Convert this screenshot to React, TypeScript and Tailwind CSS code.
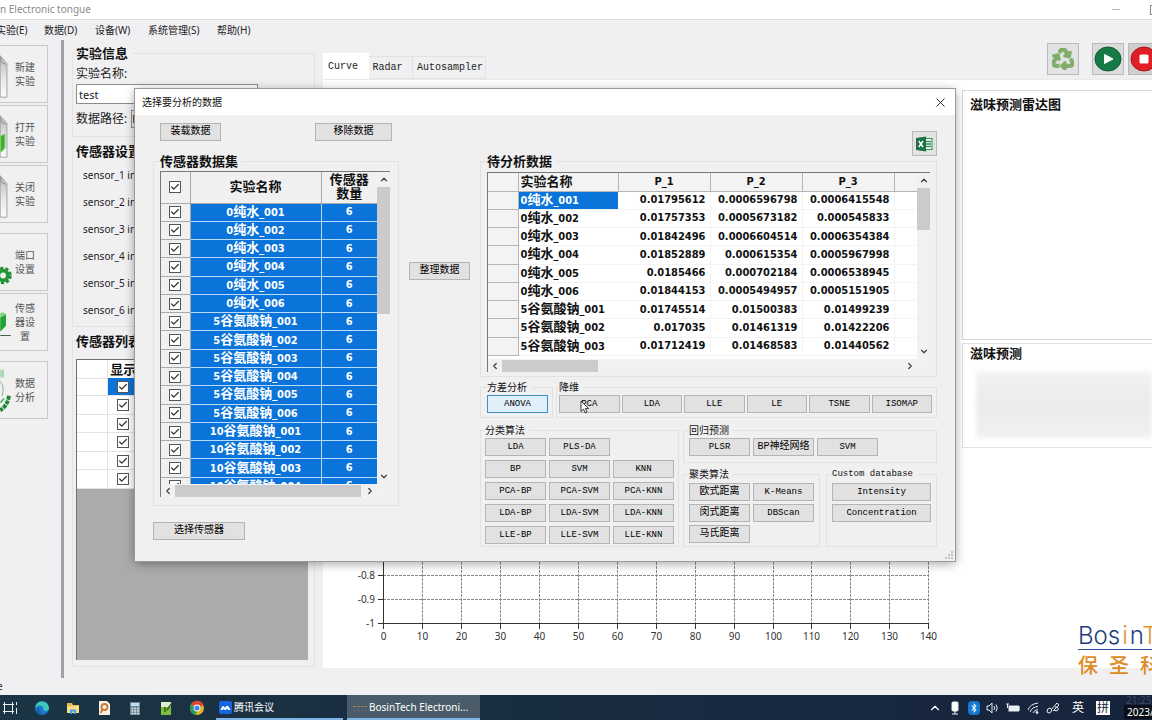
import React from "react";
import {
  Check,
  ChevronDown,
  ChevronLeft,
  ChevronRight,
  ChevronUp,
  X,
} from "lucide-react";
import { FaRecycle, FaBluetoothB } from "react-icons/fa";

const CJK = "font-['Noto_Sans','Noto_Sans_CJK_SC',sans-serif]";
const MONO = "font-['Liberation_Mono','Noto_Sans_CJK_SC',monospace]";
const BOLD = "font-['DejaVu_Sans_Condensed','DejaVu_Sans','Noto_Sans_CJK_SC',sans-serif] font-bold";

/* ---------- shared controls ---------- */

function Tick({ label }: { label: string }) {
  return (
    <label className="mx-auto grid size-3 place-items-center">
      <input
        type="checkbox"
        defaultChecked
        aria-label={label}
        className="col-start-1 row-start-1 size-3 appearance-none border border-[#555] bg-white"
      />
      <Check
        className="pointer-events-none col-start-1 row-start-1 size-2.5 text-[#333]"
        strokeWidth={3}
      />
    </label>
  );
}

function Btn({
  children,
  className = "w-[61px]",
  active = false,
}: {
  children: React.ReactNode;
  className?: string;
  active?: boolean;
}) {
  const chinese = typeof children === "string" && /[^\x00-\x7f]/.test(children);
  return (
    <button
      className={`${MONO} relative block h-[18px] border text-center leading-4 whitespace-nowrap text-black ${
        chinese ? "text-[10px]" : "text-[9px]"
      } ${active ? "border-[#3f8fc4] bg-[#dff0fb]" : "border-[#b4b4b6] bg-[#e1e1e2]"} ${className}`}
    >
      {children}
    </button>
  );
}

function Group({
  title,
  children,
  className = "",
  strong = false,
}: {
  title: string;
  children: React.ReactNode;
  className?: string;
  strong?: boolean;
}) {
  return (
    <fieldset className={`min-w-0 border border-[#e2e2e4] ${className}`}>
      <legend
        className={`pr-1 leading-4 whitespace-nowrap text-[#111] ${
          strong
            ? `${CJK} text-[13px] font-bold`
            : /^[\x00-\x7f]+$/.test(title)
              ? `${MONO} text-[9px]`
              : `${CJK} text-[10px]`
        }`}
      >
        {title}
      </legend>
      {children}
    </fieldset>
  );
}

function VScroll({ thumb }: { thumb: string }) {
  return (
    <div className="flex w-[13px] shrink-0 flex-col items-center bg-[#f1f1f2]">
      <ChevronUp className="h-[15px] w-2.5 shrink-0 text-[#444]" strokeWidth={3} />
      <div className={`w-full bg-[#cbcbcd] ${thumb}`} />
      <ChevronDown className="mt-auto h-[15px] w-2.5 shrink-0 text-[#444]" strokeWidth={3} />
    </div>
  );
}

function HScroll({ thumb }: { thumb: string }) {
  return (
    <div className="flex h-[13px] shrink-0 items-center bg-[#f1f1f2] pr-[13px]">
      <ChevronLeft className="h-2.5 w-[14px] shrink-0 text-[#444]" strokeWidth={3} />
      <div className={`h-3 bg-[#cbcbcd] ${thumb}`} />
      <ChevronRight className="ml-auto h-2.5 w-[14px] shrink-0 text-[#444]" strokeWidth={3} />
    </div>
  );
}

function SampleName({ name }: { name: string }) {
  return (
    <>
      {name.split(/([\u4e00-\u9fff]+)/).map((part, i) => (
        <span key={i} className={i % 2 ? "text-[13px]" : "text-[11px]"}>
          {part}
        </span>
      ))}
    </>
  );
}

/* ---------- data ---------- */

const SAMPLES = [
  ...["001", "002", "003", "004", "005", "006"].map((n) => `0纯水_${n}`),
  ...["001", "002", "003", "004", "005", "006"].map((n) => `5谷氨酸钠_${n}`),
  ...["001", "002", "003", "004"].map((n) => `10谷氨酸钠_${n}`),
];

const ROWS = [
  ["0纯水_001", "0.01795612", "0.0006596798", "0.0006415548"],
  ["0纯水_002", "0.01757353", "0.0005673182", "0.000545833"],
  ["0纯水_003", "0.01842496", "0.0006604514", "0.0006354384"],
  ["0纯水_004", "0.01852889", "0.000615354", "0.0005967998"],
  ["0纯水_005", "0.0185466", "0.000702184", "0.0006538945"],
  ["0纯水_006", "0.01844153", "0.0005494957", "0.0005151905"],
  ["5谷氨酸钠_001", "0.01745514", "0.01500383", "0.01499239"],
  ["5谷氨酸钠_002", "0.017035", "0.01461319", "0.01422206"],
  ["5谷氨酸钠_003", "0.01712419", "0.01468583", "0.01440562"],
];

/* ---------- sidebar ---------- */

const PageIcon = ({ green = false }: { green?: boolean }) => (
  <svg viewBox="0 0 12 58" className="h-full w-3 shrink-0">
    <defs>
      <linearGradient id="pg" x1="0" y1="0" x2="0" y2="1">
        <stop offset="0" stopColor="#b8b8ba" />
        <stop offset="0.5" stopColor="#e4e4e5" />
        <stop offset="1" stopColor="#fafafa" />
      </linearGradient>
    </defs>
    <path d="M0 10 L7 18 V53 H0 Z" fill="url(#pg)" stroke="#a3a3a5" />
    <path d="M0 11 L1 17 L6 19" fill="none" stroke="#8f8f91" />
    {green && <path d="M0 31 L5 29 V43 L2 47 H0 Z" fill="#43ae34" stroke="#8edb7a" />}
  </svg>
);

const GearIcon = () => (
  <svg viewBox="0 0 12 58" className="h-full w-3 shrink-0">
    <circle cx="3" cy="43" r="7" fill="none" stroke="#1f8a34" strokeWidth="4" strokeDasharray="3 2" />
    <circle cx="3" cy="43" r="5" fill="none" stroke="#23963a" strokeWidth="4" />
  </svg>
);

const SensorIcon = () => (
  <svg viewBox="0 0 12 58" className="h-full w-3 shrink-0">
    <path d="M0 24 L6 21 V33 L0 39 Z" fill="#23a535" />
    <path d="M0 24 L6 21 L3 19 L0 20 Z" fill="#7fd37f" />
    <path d="M0 43 H11" stroke="#3a5a40" />
  </svg>
);

const AnalysisIcon = () => (
  <svg viewBox="0 0 12 58" className="h-full w-3 shrink-0">
    <rect x="0" y="8" width="4" height="8" fill="#a9d8b3" />
    <path d="M0 20 Q5 26 2 35" fill="none" stroke="#8aa892" />
    <path d="M9 35 Q8 45 0 50" fill="none" stroke="#1f8a34" strokeWidth="4" strokeDasharray="4 1" />
    <path d="M0 42 L4 38" stroke="#57bd69" strokeWidth="2" />
  </svg>
);

const SIDE = [
  { text: "新建实验", icon: <PageIcon />, gap: "" },
  { text: "打开实验", icon: <PageIcon green />, gap: "mt-0.5" },
  { text: "关闭实验", icon: <PageIcon />, gap: "mt-0.5" },
  { text: "端口设置", icon: <GearIcon />, gap: "mt-2.5" },
  { text: "传感器设置", icon: <SensorIcon />, gap: "mt-0.5" },
  { text: "数据分析", icon: <AnalysisIcon />, gap: "mt-2.5" },
];

function Sidebar() {
  return (
    <nav className="flex w-[61px] shrink-0 flex-col pt-[5px]">
      {SIDE.map((s) => (
        <button
          key={s.text}
          className={`flex h-[58px] w-12 items-center border border-l-0 border-[#c9c9cb] bg-[#f0f0f1] ${s.gap}`}
        >
          {s.icon}
          <span className={`${CJK} ml-[3px] w-5 text-center text-[10px] leading-[14px] break-all text-[#555]`}>
            {s.text}
          </span>
        </button>
      ))}
    </nav>
  );
}

/* ---------- experiment panel ---------- */

function ExperimentPanel() {
  return (
    <section className="flex w-[243px] shrink-0 flex-col pt-[5px] pb-[11px]">
      <Group title="实验信息" strong className="px-[3px] pb-2">
        <label htmlFor="exp-name" className={`${CJK} mt-[3px] block text-xs leading-5 text-[#222]`}>
          实验名称:
        </label>
        <input
          id="exp-name"
          defaultValue="test"
          className={`${CJK} block h-5 w-[182px] border border-[#8c8c8e] bg-white px-0.5 text-[11px] text-[#222]`}
        />
        <div className="mt-1.5 flex h-[18px] items-center gap-1">
          <label htmlFor="exp-path" className={`${CJK} text-xs leading-[18px] whitespace-nowrap text-[#222]`}>
            数据路径:
          </label>
          <input
            id="exp-path"
            defaultValue="E:"
            className={`${CJK} h-[18px] w-[120px] border border-[#8c8c8e] bg-[#f0f0f1] text-[10px]`}
          />
        </div>
      </Group>
      <Group title="传感器设置" strong className="mt-1.5 px-[3px] pt-[3px] pb-0.5">
        {[1, 2, 3, 4, 5, 6].map((n) => (
          <p key={n} className={`${CJK} pl-[7px] text-[10px] leading-[27px] text-[#222]`}>
            sensor_{n} info
          </p>
        ))}
      </Group>
      <fieldset className="mt-1.5 flex min-h-0 min-w-0 flex-1 flex-col border border-[#e2e2e4] px-[3px] pt-2.5 pb-1.5">
        <legend className={`${CJK} pr-1 text-[13px] leading-4 font-bold text-[#111]`}>传感器列表</legend>
        <div className="min-h-0 w-[232px] flex-1 overflow-hidden border-t border-l border-[#6f6f71] bg-[#ababad]">
          <table className="h-[129px] w-full table-fixed border-collapse bg-white">
            <thead>
              <tr>
                <th className="h-[18px] w-[30px] border border-t-0 border-l-0 border-[#e3e3e5]" />
                <th className={`${CJK} w-8 p-0 text-[13px] leading-[18px] text-[#111]`}>显示</th>
                <th className="p-0" />
              </tr>
            </thead>
            <tbody>
              {[1, 2, 3, 4, 5, 6].map((n) => (
                <tr key={n}>
                  <td className="border border-l-0 border-[#e3e3e5] p-0" />
                  <td className={`p-0 ${n === 1 ? "bg-[#0a74da]" : "border border-[#e3e3e5]"}`}>
                    <Tick label={`sensor_${n}`} />
                  </td>
                  <td className="border border-[#e3e3e5] p-0" />
                </tr>
              ))}
            </tbody>
          </table>
        </div>
      </fieldset>
    </section>
  );
}

/* ---------- chart area ---------- */

function CurveChart() {
  const xs = Array.from({ length: 15 }, (_, i) => i);
  return (
    <svg viewBox="0 0 636 150" className="h-[150px] w-[636px] shrink-0">
      {xs.map((i) => {
        const x = 60.5 + Math.round(i * 38.95);
        return (
          <g key={i}>
            {i > 0 && <path d={`M${x} 0 V106`} stroke="#8a8a8a" strokeDasharray="3 1" />}
            <path d={`M${x} 106 V111`} stroke="#333" />
            <text x={x} y="122" textAnchor="middle" fontSize="10" fill="#333" className={CJK}>
              {i * 10}
            </text>
          </g>
        );
      })}
      {[
        [57.5, "-0.8"],
        [81.5, "-0.9"],
        [105.5, "-1"],
      ].map(([y, t]) => (
        <g key={t}>
          {t !== "-1" && <path d={`M60 ${y} H606`} stroke="#8a8a8a" strokeDasharray="3 1" />}
          <path d={`M55 ${y} H60`} stroke="#333" />
          <text x="52" y={Number(y) + 3} textAnchor="end" fontSize="10" fill="#333" className={CJK}>
            {t}
          </text>
        </g>
      ))}
      <path d="M60.5 0 V106 M60 105.5 H606" stroke="#333" fill="none" />
    </svg>
  );
}

function Workspace() {
  return (
    <section className="flex min-w-0 flex-1 flex-col pb-2.5 pl-2">
      <div className="flex h-[39px] shrink-0 items-start justify-between">
        <div className={`${MONO} flex items-end self-end text-[10px] text-[#222]`} role="tablist">
          <button role="tab" aria-selected className="h-[26px] w-[46px] bg-white pr-[6px]">
            Curve
          </button>
          <button role="tab" className="h-[23px] w-[44px] border border-l-0 border-[#e2e2e4] pr-[6px]">
            Radar
          </button>
          <button role="tab" className="h-[23px] w-[73px] border border-l-0 border-[#e2e2e4] pl-0.5">
            Autosampler
          </button>
        </div>
        <div className="-mr-2 flex pt-[3px]">
          <button aria-label="Clear" className="grid size-8 place-items-center border border-[#b9b9bb] bg-[#e3e3e4]">
            <FaRecycle className="size-[22px] stroke-[#7fae6b] stroke-[36px] text-[#7fae6b]" />
          </button>
          <button aria-label="Start" className="ml-[13px] grid size-8 place-items-center border border-[#b9b9bb] bg-[#dcdcdd]">
            <svg viewBox="0 0 28 26" className="h-[26px] w-7">
              <ellipse cx="14" cy="13" rx="13" ry="12" fill="#157a45" stroke="#0f5a33" />
              <path d="M10.500 8.500 L19 13 L10.500 17.500 Z" fill="#fff" stroke="#fff" strokeLinejoin="round" />
            </svg>
          </button>
          <button aria-label="Stop" className="ml-1 grid size-8 place-items-center border border-[#b9b9bb] bg-[#cfcfd0]">
            <svg viewBox="0 0 28 26" className="h-[26px] w-7">
              <ellipse cx="14" cy="13" rx="13" ry="12" fill="#e01f26" stroke="#a3161b" />
              <rect x="9.500" y="8.500" width="9" height="9" rx="1.500" fill="#fff" />
            </svg>
          </button>
        </div>
      </div>
      <div className="flex min-h-0 flex-1 border-t border-[#e9e9eb] bg-white">
        <div className="flex min-w-0 flex-1 items-end overflow-hidden">
          <CurveChart />
        </div>
        <aside className={`${CJK} w-[190px] shrink-0 pt-2.5 text-[13px] font-bold text-[#111]`}>
          <div className="h-[250px] border border-r-0 border-[#d6d6d8] bg-white px-[7px] pt-1 leading-[18px]">
            滋味预测雷达图
          </div>
          <div className="mt-[3px] h-[105px] border border-r-0 border-[#e2e2e4] bg-white pl-[7px] leading-[18px]">
            滋味预测
            <div className="mt-[9px] ml-1.5 h-[67px] bg-linear-to-b from-[#f3f3f4] via-[#ebebec] to-[#f1f1f2] blur-[2px]" />
          </div>
        </aside>
      </div>
    </section>
  );
}

/* ---------- analysis dialog ---------- */

function SourceTable() {
  return (
    <div className="flex h-[326px] w-[230px] flex-col border-t border-l border-[#777779]">
      <div className="flex min-h-0 flex-1">
        <div className="min-w-0 flex-1 overflow-hidden">
          <table className={`${BOLD} h-[324px] w-full table-fixed border-collapse text-[11px] leading-[14px]`}>
            <thead>
              <tr className="h-[31px]">
                <th className="w-[29px] border-r border-b border-[#a9a9ab] p-0">
                  <Tick label="全选" />
                </th>
                <th className="border-r border-b border-[#a9a9ab] p-0 text-[13px] leading-[14px] text-[#111]">
                  实验名称
                </th>
                <th className="w-[56px] border-b border-[#a9a9ab] p-0 text-[13px] leading-[14px] text-[#111]">
                  传感器
                  <br />
                  数量
                </th>
              </tr>
            </thead>
            <tbody>
              {SAMPLES.map((s) => (
                <tr key={s}>
                  <td className="border-r border-b border-[#a9a9ab] p-0">
                    <Tick label={s} />
                  </td>
                  <td className="border-r border-b border-[#b8dcf5] bg-[#0a74da] p-0 text-center whitespace-nowrap text-white">
                    <SampleName name={s} />
                  </td>
                  <td className="border-b border-[#b8dcf5] bg-[#0a74da] p-0 text-center text-white">
                    6
                  </td>
                </tr>
              ))}
            </tbody>
          </table>
        </div>
        <VScroll thumb="h-[127px]" />
      </div>
      <HScroll thumb="w-[186px]" />
    </div>
  );
}

function ResultTable() {
  return (
    <div className="flex h-[200px] flex-col border-t border-l border-[#777779]">
      <div className="flex min-h-0 flex-1 bg-white">
        <div className="min-w-0 flex-1 overflow-hidden">
          <table className={`${BOLD} h-[183px] w-full table-fixed border-collapse text-[11px] leading-[14px] text-[#111]`}>
            <thead>
              <tr className="h-[18px] bg-[#f3f3f4]">
                <th className="w-[30px] border-r border-b border-[#b5b5b7] p-0" />
                <th className="w-[100px] border-r border-b border-[#b5b5b7] py-0 pr-0 pl-0.5 text-left text-[13px]">
                  实验名称
                </th>
                {["P_1", "P_2", "P_3"].map((h) => (
                  <th key={h} className="w-[92px] border-r border-b border-[#b5b5b7] p-0">
                    {h}
                  </th>
                ))}
                <th className="border-b border-[#b5b5b7] p-0" />
              </tr>
            </thead>
            <tbody>
              {ROWS.map((r, i) => (
                <tr key={r[0]}>
                  <td className="border-r border-b border-[#b5b5b7] bg-[#f3f3f4] p-0" />
                  <td
                    className={`border-b border-[#f3f3f4] py-0 pr-0 pl-0.5 whitespace-nowrap ${
                      i === 0 ? "bg-[#0a74da] text-white" : ""
                    }`}
                  >
                    <SampleName name={r[0]} />
                  </td>
                  {r.slice(1).map((v, j) => (
                    <td key={j} className="border-r border-b border-[#f3f3f4] py-0 pr-1 pl-0 text-right">
                      {v}
                    </td>
                  ))}
                  <td className="border-b border-[#f3f3f4] p-0" />
                </tr>
              ))}
            </tbody>
          </table>
        </div>
        <VScroll thumb="h-[42px]" />
      </div>
      <HScroll thumb="w-[96px]" />
    </div>
  );
}

function AnalysisDialog() {
  return (
    <div
      role="dialog"
      aria-label="选择要分析的数据"
      className="absolute top-[89px] left-[135px] flex w-[820px] flex-col bg-[#f0f0f1] shadow-[0_2px_10px_rgba(0,0,0,0.4)] outline-1 outline-[#9a9a9c]"
    >
      <div className="flex h-[26px] items-center justify-between bg-white pr-[7px] pl-[7px]">
        <h2 className={`${CJK} text-[10px] text-[#111]`}>选择要分析的数据</h2>
        <button aria-label="Close">
          <X className="size-[15px] text-[#222]" strokeWidth={1.5} />
        </button>
      </div>
      <div className="flex gap-2.5 pr-[18px] pl-[18px]">
        <div className="w-[246px] shrink-0 pt-2">
          <div className="flex justify-between pr-[7px] pl-[7px]">
            <Btn>装载数据</Btn>
            <Btn className="w-[77px]">移除数据</Btn>
          </div>
          <Group title="传感器数据集" strong className="mt-3 pt-0.5 pr-2 pb-2 pl-1.5">
            <SourceTable />
          </Group>
          <Btn className="mt-4 w-[92px]">选择传感器</Btn>
        </div>

        <div className="shrink-0 pt-[147px]">
          <Btn>整理数据</Btn>
        </div>

        <div className="flex min-w-0 flex-1 flex-col pt-4 pb-3.5">
          <button
            aria-label="Export to Excel"
            className="-mb-[3px] grid size-[25px] place-items-center self-end border border-[#b9b9bb] bg-[#e3e3e4]"
          >
            <svg viewBox="0 0 17 16" className="h-4 w-[17px]">
              <rect x="8" y="2.500" width="8" height="11" fill="#fff" stroke="#2f8a55" />
              <path d="M10 5.500 H15 M10 8 H15 M10 10.500 H15" stroke="#2f8a55" strokeWidth="1.500" />
              <path d="M0 2 L10 0.500 V15.500 L0 14 Z" fill="#1d7244" />
              <path d="M2.800 5 L7 11 M7 5 L2.800 11" stroke="#fff" strokeWidth="1.500" />
            </svg>
          </button>
          <Group title="待分析数据" strong className="pt-[3px] pr-1.5 pb-1 pl-1.5">
            <ResultTable />
          </Group>

          <div className="mt-0.5 flex gap-[3px]">
            <Group title="方差分析" className="shrink-0 pr-1 pb-1 pl-1.5">
              <Btn active>ANOVA</Btn>
            </Group>
            <Group title="降维" className="flex-1 pr-1 pb-1 pl-0.5">
              <div className="grid grid-cols-6 gap-0.5">
                <Btn className="w-full">
                  PCA
                  <svg viewBox="0 0 10 14" className="absolute top-1 left-5 h-3.5 w-2.5">
                    <path
                      d="M1 1 V11.500 L3.500 9.200 L5.200 13 L7 12.200 L5.300 8.600 H8.700 Z"
                      fill="#fff"
                      stroke="#222"
                      strokeWidth="0.900"
                    />
                  </svg>
                </Btn>
                {["LDA", "LLE", "LE", "TSNE", "ISOMAP"].map((t) => (
                  <Btn key={t} className="w-full">
                    {t}
                  </Btn>
                ))}
              </div>
            </Group>
          </div>

          <div className="mt-1 flex gap-1">
            <Group title="分类算法" className="shrink-0 px-1 pb-0.5">
              <div className="grid grid-cols-3 gap-x-[3px] gap-y-1">
                <Btn>LDA</Btn>
                <Btn className="col-span-2 w-[61px]">PLS-DA</Btn>
                {[
                  "BP",
                  "SVM",
                  "KNN",
                  "PCA-BP",
                  "PCA-SVM",
                  "PCA-KNN",
                  "LDA-BP",
                  "LDA-SVM",
                  "LDA-KNN",
                  "LLE-BP",
                  "LLE-SVM",
                  "LLE-KNN",
                ].map((t) => (
                  <Btn key={t}>{t}</Btn>
                ))}
              </div>
            </Group>
            <div className="flex min-w-0 flex-1 flex-col gap-[3px]">
              <Group title="回归预测" className="px-[5px] pb-1.5">
                <div className="flex gap-[3px]">
                  <Btn>PLSR</Btn>
                  <Btn>BP神经网络</Btn>
                  <Btn>SVM</Btn>
                </div>
              </Group>
              <div className="flex flex-1 gap-1.5">
                <Group title="聚类算法" className="shrink-0 px-[5px] pt-px">
                  <div className="grid grid-cols-2 gap-[3px]">
                    <Btn>欧式距离</Btn>
                    <Btn>K-Means</Btn>
                    <Btn>闵式距离</Btn>
                    <Btn>DBScan</Btn>
                    <Btn>马氏距离</Btn>
                  </div>
                </Group>
                <Group title="Custom database" className="flex-1 px-[5px] pt-px">
                  <div className="flex flex-col gap-[3px]">
                    <Btn className="w-full">Intensity</Btn>
                    <Btn className="w-full">Concentration</Btn>
                  </div>
                </Group>
              </div>
            </div>
          </div>
        </div>
      </div>
      <svg viewBox="0 0 8 8" className="absolute right-0.5 bottom-0.5 size-2">
        <path d="M6 0h2v2H6z M6 3h2v2H6z M3 3h2v2H3z M6 6h2v2H6z M3 6h2v2H3z M0 6h2v2H0z" fill="#c4c4c6" />
      </svg>
    </div>
  );
}

/* ---------- taskbar ---------- */

const TASK_ICONS: { name: string; art: React.ReactNode }[] = [
  {
    name: "Task View",
    art: (
      <path
        d="M1.500 2 V4.500 H9.500 V2 M1.500 14 V11.500 H9.500 V14 M0 4.500 H11 M0 11.500 H11 M1.500 4.500 V11.500 M9.500 4.500 V11.500 M13.500 2 V5 M13.500 8 V14"
        fill="none"
        stroke="#e8eef2"
      />
    ),
  },
  {
    name: "Edge",
    art: (
      <>
        <circle cx="8" cy="8" r="7" fill="#1b77c9" />
        <path d="M2 5 A7 7 0 0 1 15 8 Q15 11 11 11 Q9 11 9.500 9 Q9 5 5 5.500 Q3 6 1.500 8 Z" fill="#3cc6b8" />
        <path d="M5 9 Q5 14 11 14.400 A7 7 0 0 1 3 13 Q1 9 5 7 Z" fill="#175fa8" />
      </>
    ),
  },
  {
    name: "Explorer",
    art: (
      <>
        <path d="M2 3 H7 L8 5 H14 V13 H2 Z" fill="#e9b949" />
        <path d="M2 6 H14 V13 H2 Z" fill="#f8dc86" />
        <path d="M5 14 V9.500 H11 V14 H9 V11.500 H7 V14 Z" fill="#4a9fdc" />
      </>
    ),
  },
  {
    name: "Search",
    art: (
      <>
        <path d="M3 1 H11 L14 4 V15 H3 Z" fill="#f3f0ea" />
        <circle cx="8.500" cy="7" r="3" fill="none" stroke="#cf7a2c" strokeWidth="1.800" />
        <path d="M6.500 9.500 L4.500 13" stroke="#cf7a2c" strokeWidth="1.800" />
      </>
    ),
  },
  {
    name: "Calculator",
    art: (
      <>
        <path d="M3 2 H13 V15 H3 Z" fill="#6d8796" />
        <path d="M4 3 H12 V6 H4 Z" fill="#bfe0f2" />
        <path d="M4.500 8.500 H12 M4.500 11 H12 M4.500 13.500 H12" stroke="#dfeaf0" strokeWidth="1.500" strokeDasharray="1.800 1" />
      </>
    ),
  },
  {
    name: "Notes",
    art: (
      <>
        <path d="M3 2 H13 V15 H3 Z" fill="#dff0cf" />
        <path d="M3 7 H13 V15 H3 Z" fill="#7cbf3f" />
        <path d="M7 12 V7 M9 10 L14 3" stroke="#2f5a22" strokeWidth="1.500" />
      </>
    ),
  },
  {
    name: "Chrome",
    art: (
      <>
        <circle cx="8" cy="8" r="7" fill="#e0b52c" />
        <path d="M8 8 L2 4.400 A7 7 0 0 1 14.500 5 Z" fill="#dc4437" />
        <path d="M8 8 L1.900 4.500 A7 7 0 0 0 7 15 Z" fill="#2f9a57" />
        <circle cx="8" cy="8" r="3.400" fill="#fff" />
        <circle cx="8" cy="8" r="2.600" fill="#4285f4" />
      </>
    ),
  },
];

function TrayGlyph({ children }: { children: React.ReactNode }) {
  return (
    <svg viewBox="0 0 14 14" className="size-3.5 shrink-0" fill="none" stroke="#e8eef2">
      {children}
    </svg>
  );
}

function Taskbar() {
  return (
    <footer
      className={`${CJK} flex h-[25px] shrink-0 items-stretch overflow-hidden bg-linear-to-r from-[#1b3544] to-[#16233c] text-[10px] text-white`}
    >
      <div className="flex items-center gap-[15px] pl-[3px]">
        {TASK_ICONS.map((t) => (
          <button key={t.name} aria-label={t.name}>
            <svg viewBox="0 0 16 16" className="size-4">
              {t.art}
            </svg>
          </button>
        ))}
      </div>
      <button className="ml-[11px] flex w-[127px] items-center gap-0.5 border-b-2 border-[#7fb5e6] pt-0.5 pl-[3px]">
        <svg viewBox="0 0 13 13" className="size-[13px]">
          <rect width="13" height="13" rx="2" fill="#1266e0" />
          <path d="M1.500 9 Q4 2 6 7 Q8.500 1.500 11.500 9 H9 Q8 6 7 9 H5.500 Q4.500 6.500 4 9 Z" fill="#fff" />
        </svg>
        腾讯会议
      </button>
      <button className="ml-1 flex w-[133px] items-center border-b-2 border-[#7fb5e6] bg-[#4a5c69] pt-0.5 pl-1.5 whitespace-nowrap">
        <svg viewBox="0 0 14 10" className="mr-0.5 h-2.5 w-3.5 shrink-0">
          <path d="M0 3.500 H14" stroke="#a08055" strokeDasharray="3 1" />
          <path d="M0 7.500 H14" stroke="#5f6260" />
        </svg>
        BosinTech Electroni...
      </button>
      <div className="ml-auto flex items-center gap-1.5">
        <ChevronUp className="size-3.5" strokeWidth={2} />
        <TrayGlyph>
          <rect x="4" y="1" width="6" height="9" rx="1" fill="#fff" />
          <path d="M7 10 V13 M4 13 H10" />
        </TrayGlyph>
        <span className="grid h-3.5 w-3 place-items-center rounded bg-[#1278d4]">
          <FaBluetoothB className="size-2.5" />
        </span>
        <TrayGlyph>
          <path d="M1 5 H3 L6 2 V12 L3 9 H1 Z M8 5 Q9.500 7 8 9 M10 3.500 Q12.500 7 10 10.500" />
        </TrayGlyph>
        <TrayGlyph>
          <path d="M0 3 H3 M1.500 3 V7 M12.500 6 H14 V9 H12.500" />
          <rect x="3" y="5" width="9.500" height="5" fill="#e8eef2" />
        </TrayGlyph>
        <TrayGlyph>
          <path d="M2 9 Q4 3 12 2 M4 11 Q6 6 12 5.500 M7 12 Q8 9 12 8.500" />
          <circle cx="11" cy="11.500" r="1" fill="#e8eef2" />
        </TrayGlyph>
        <TrayGlyph>
          <path d="M1 11 Q1 7 4 7 Q7 8 5 11 Q3 13 1 11 M5 9 L11 2 L13 4 L7 10 M9 6 Q13 6 12 9 Q10 11 8 9" />
        </TrayGlyph>
        <span className="ml-1.5 text-xs">英</span>
        <span className="ml-1.5 grid size-3.5 place-items-center bg-white text-xs leading-3 text-[#16233c]">拼</span>
        <div className="ml-2 flex h-full w-[28px] flex-col items-start overflow-hidden whitespace-nowrap">
          <span className="pl-0.5 leading-[10px] text-[#3b4963]">21:25</span>
          <span className="bg-[#0b0f18] pl-[3px] leading-[14px]">2023/</span>
        </div>
      </div>
    </footer>
  );
}

/* ---------- application ---------- */

export default function App() {
  return (
    <div className="relative flex h-screen w-full flex-col overflow-hidden bg-[#f0f0f2]">
      <header className="flex h-5 shrink-0 items-center justify-between overflow-hidden border-b border-[#dcdcde] bg-white">
        <h1 className={`${CJK} text-[10px] text-[#8a8a8c]`}>n Electronic tongue</h1>
        <div className="-mr-2 flex items-center gap-[30px]">
          <span className="h-px w-2 bg-[#b5b5b7]" />
          <span className="size-2.5 border border-[#8a8a8c]" />
        </div>
      </header>
      <nav className={`${CJK} -ml-1 flex h-5 shrink-0 items-center text-[10px] text-[#222]`}>
        <button className="w-[48px] text-left">实验(E)</button>
        <button className="w-[51px] text-left">数据(D)</button>
        <button className="w-[53px] text-left">设备(W)</button>
        <button className="w-[69px] text-left">系统管理(S)</button>
        <button className="text-left">帮助(H)</button>
      </nav>
      <main className="flex min-h-0 flex-1">
        <Sidebar />
        <div className="mr-2 w-[3px] shrink-0 bg-[#a2a2a6]" />
        <ExperimentPanel />
        <Workspace />
      </main>
      <div className={`${CJK} h-[17px] shrink-0 text-[10px] leading-[17px] text-[#222]`}>
        <span className="-ml-[3px]">e</span>
      </div>
      <Taskbar />

      <div className="absolute bottom-[44px] left-[1078px] whitespace-nowrap">
        <div className="w-[120px] border-b border-[#2d4f9c] font-['Inter',sans-serif] text-2xl leading-[26px] font-light text-[#1c3f7c]">
          Bos<span className="px-0.5 text-[#e0952f]">i</span>n<span className="text-[#e0952f]">T</span>
        </div>
        <div className={`${CJK} flex gap-[11px] pt-1.5 text-xl leading-5 font-medium text-[#e08a25]`}>
          <span>保</span>
          <span>圣</span>
          <span>科</span>
        </div>
      </div>

      <AnalysisDialog />
    </div>
  );
}
